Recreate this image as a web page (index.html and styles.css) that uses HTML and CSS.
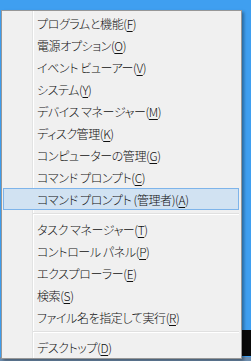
FILE: index.html
```html
<!DOCTYPE html>
<html lang="ja">
<head>
    <meta charset="UTF-8">
    <title>クイック アクセス メニュー</title>
    <link rel="stylesheet" href="styles.css">
</head>
<body>
    <div class="taskbar-edge"></div>
    <ul class="menu">
        <li class="item">プログラムと機能(<u>F</u>)</li>
        <li class="item">電源オプション(<u>O</u>)</li>
        <li class="item">イベント ビューアー(<u>V</u>)</li>
        <li class="item">システム(<u>Y</u>)</li>
        <li class="item">デバイス マネージャー(<u>M</u>)</li>
        <li class="item">ディスク管理(<u>K</u>)</li>
        <li class="item">コンピューターの管理(<u>G</u>)</li>
        <li class="item">コマンド プロンプト(<u>C</u>)</li>
        <li class="item selected">コマンド プロンプト (管理者)(<u>A</u>)</li>
        <li class="sep"></li>
        <li class="item">タスク マネージャー(<u>T</u>)</li>
        <li class="item">コントロール パネル(<u>P</u>)</li>
        <li class="item">エクスプローラー(<u>E</u>)</li>
        <li class="item">検索(<u>S</u>)</li>
        <li class="item">ファイル名を指定して実行(<u>R</u>)</li>
        <li class="sep"></li>
        <li class="item">デスクトップ(<u>D</u>)</li>
    </ul>
</body>
</html>
```

FILE: styles.css
```css
body {
    margin: 0;
    padding: 10px 0 0 1px;
    height: 361px;
    box-sizing: border-box;
    overflow: hidden;
    background: linear-gradient(to bottom, #3f9ff0 0, #3f9ff0 357px, #6f8fb0 357px);
    font-family: 'Meiryo UI', 'Noto Sans CJK JP', sans-serif;
    font-size: 12px;
    font-weight: 300;
    font-feature-settings: "palt";
    letter-spacing: -0.4px;
    color: #111;
    position: relative;
}

/* desktop taskbar peeking out behind the menu */
.taskbar-edge {
    position: absolute;
    left: 242px;
    top: 330px;
    width: 9px;
    height: 26px;
    background: #0a0a0a;
}

.menu {
    position: relative;
    list-style: none;
    margin: 0;
    padding: 1px 2px 0 1px;
    width: 236px;
    border: 1px solid #979797;
    background:
        linear-gradient(to right, transparent 30px, #e2e3e3 30px, #e2e3e3 31px, #fff 31px, #fff 32px, transparent 32px),
        #f0f0f0;
    box-shadow: 2px 2px 3px rgba(0, 0, 0, 0.35);
}

.item {
    height: 22px;
    line-height: 22px;
    padding-left: 33px;
    border: 1px solid transparent;
    box-sizing: border-box;
    white-space: nowrap;
}

.item u {
    text-underline-offset: 2px;
}

.item.selected {
    background: #d1e2f2;
    border-color: #7eb4ea;
}

.sep {
    height: 8px;
    margin-left: 30px;
    background: linear-gradient(to bottom, transparent 3px, #e0e0e0 3px, #e0e0e0 4px, #fff 4px, #fff 5px, transparent 5px);
}
```
